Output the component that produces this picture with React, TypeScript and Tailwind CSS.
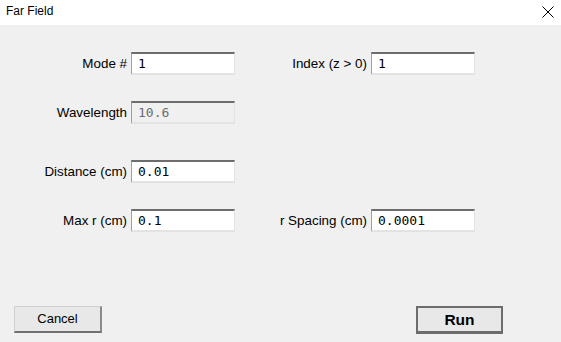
import React from 'react';

const font = "font-['Liberation_Sans',Arial,sans-serif]";
const mono = "font-['DejaVu_Sans_Mono','Liberation_Mono',monospace]";

type FieldProps = { label: string; value: string; disabled?: boolean };

const Label = ({ text }: { text: string }) => (
    <span className={`${font} text-[13.4px] text-[#000] text-right leading-none`}>{text}</span>
);

const Box = ({ value, disabled }: { value: string; disabled?: boolean }) => (
    <div
        className={`
            h-[23px] w-[104px] flex items-center pl-[6px]
            border-t-2 border-l border-r border-b-2
            border-t-[#6d6d6d] border-l-[#a0a0a0] border-r-[#e3e3e3] border-b-[#e3e3e3]
            ${disabled ? 'bg-[#f0f0f0] text-[#6d6d6d]' : 'bg-white text-black'}
            ${mono} text-[13px] leading-none
        `}
    >
        {value}
    </div>
);

const Field = ({ label, value, disabled }: FieldProps) => (
    <>
        <Label text={label} />
        <Box value={value} disabled={disabled} />
    </>
);

const App = () => {
    return (
        <div className={`w-[561px] h-[342px] bg-[#f0f0f0] flex flex-col overflow-hidden ${font}`}>
            {/* Title bar */}
            <div className="h-[25px] bg-white flex items-center justify-between pl-[6px] pr-[4px] pb-[4px]">
                <span className="text-[12px] text-black">Far Field</span>
                <svg width="14" height="14" viewBox="0 0 14 14" className="mr-[2px] mt-[2px]">
                    <path d="M1.5 1.5 L12.5 12.5 M12.5 1.5 L1.5 12.5" stroke="#000" strokeWidth="1" />
                </svg>
            </div>

            {/* Fields */}
            <div className="grid grid-cols-[127px_104px_128px_104px] gap-x-[4px] items-center pt-[27px]">
                <Field label="Mode #" value="1" />
                <Field label="Index (z > 0)" value="1" />

                <div className="col-span-4 h-[26px]" />
                <Field label="Wavelength" value="10.6" disabled />
                <div />
                <div className="h-[23px]" />

                <div className="col-span-4 h-[36px]" />
                <Field label="Distance (cm)" value="0.01" />
                <div />
                <div className="h-[23px]" />

                <div className="col-span-4 h-[26px]" />
                <Field label="Max r (cm)" value="0.1" />
                <Field label="r Spacing (cm)" value="0.0001" />
            </div>

            {/* Buttons */}
            <div className="flex justify-between items-start pl-[14px] pr-[58px] mt-[74px]">
                <button
                    className="
                        w-[88px] h-[27px] bg-[#e8e8e8] text-[13px] text-black
                        border-t border-l border-t-[#cfcfcf] border-l-[#cfcfcf]
                        border-r-2 border-b-2 border-r-[#8a8a8a] border-b-[#707070]
                    "
                >
                    Cancel
                </button>
                <button
                    className="
                        w-[87px] h-[28px] bg-[#e8e8e8] text-[15.5px] font-bold text-black
                        border-2 border-[#6d6d6d] border-b-[3px]
                    "
                >
                    Run
                </button>
            </div>
        </div>
    );
};

export default App;
